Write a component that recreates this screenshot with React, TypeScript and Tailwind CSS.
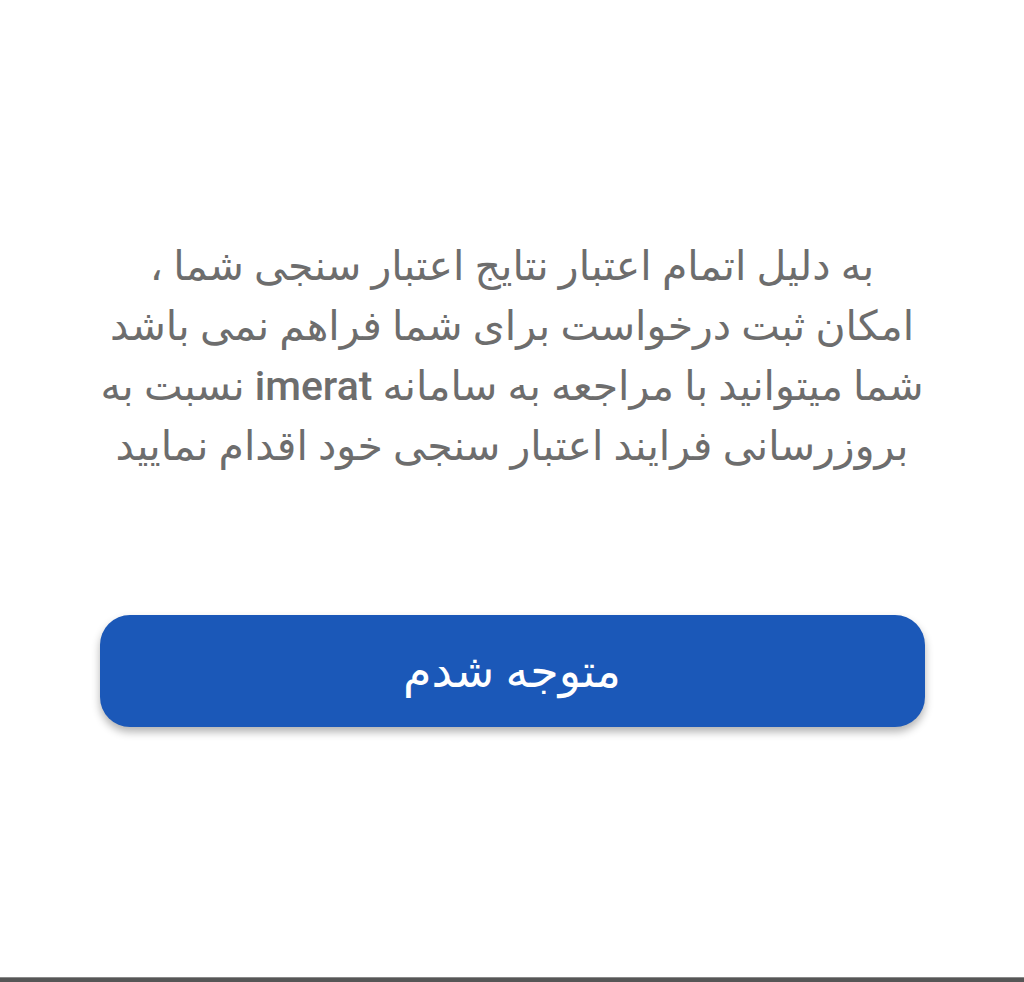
export default function App() {
  return (
    <div
      dir="rtl"
      className="relative flex h-[982px] w-[1024px] flex-col items-center bg-white"
      style={{ fontFamily: 'Roboto, "DejaVu Sans", sans-serif' }}
    >
      {/* Message */}
      <p className="mt-[236px] w-[900px] text-center text-[41px] leading-[60px] text-[#6d6d6d]">
        به دلیل اتمام اعتبار نتایج اعتبار سنجی شما ،
        <br />
        امکان ثبت درخواست برای شما فراهم نمی باشد
        <br />
        شما میتوانید با مراجعه به سامانه <span className="font-medium">imerat</span> نسبت به
        <br />
        بروزرسانی فرایند اعتبار سنجی خود اقدام نمایید
      </p>

      {/* Confirm */}
      <button className="mt-[139px] flex h-[112px] w-[825px] items-center justify-center rounded-[30px] bg-[#1b58b8] text-[46px] text-white shadow-[0_5px_8px_rgba(0,0,0,0.3)]">
        متوجه شدم
      </button>

      <div className="mt-auto h-[5px] w-full border-t border-[#8a8a8a] bg-[#565656]" />
    </div>
  );
}
